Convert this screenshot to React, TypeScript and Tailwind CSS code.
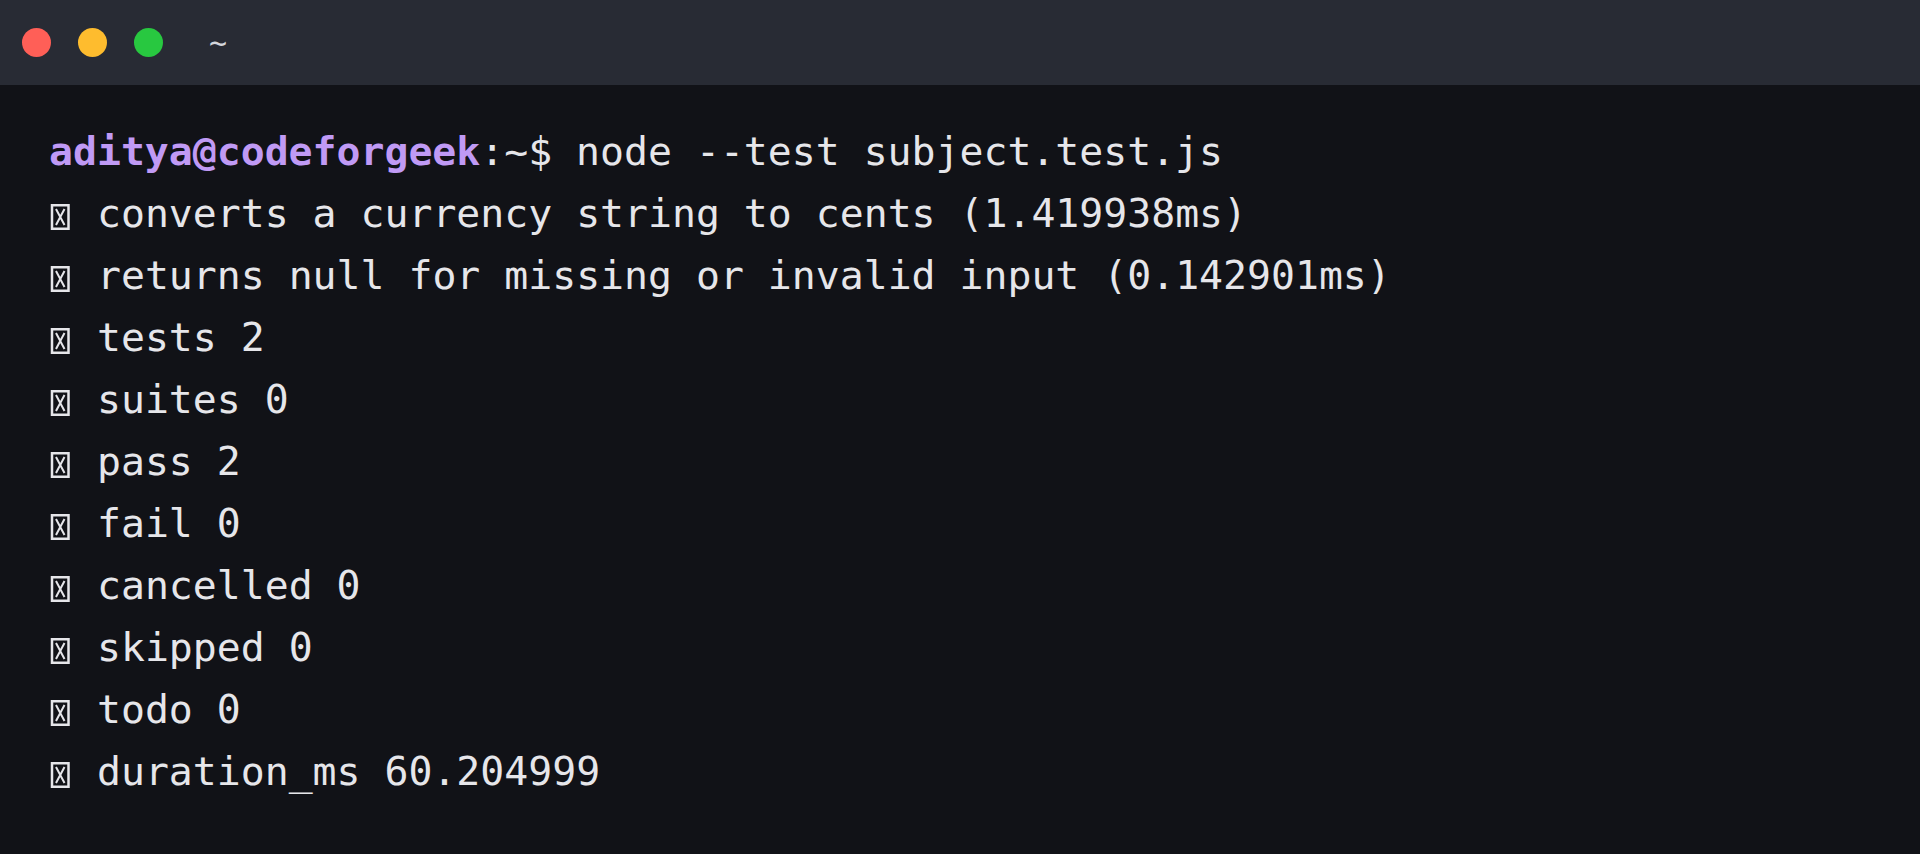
import React from 'react';

const lines = [
  'converts a currency string to cents (1.419938ms)',
  'returns null for missing or invalid input (0.142901ms)',
  'tests 2',
  'suites 0',
  'pass 2',
  'fail 0',
  'cancelled 0',
  'skipped 0',
  'todo 0',
  'duration_ms 60.204999',
];

// missing-glyph box the terminal prints in place of the status symbol
function Tofu() {
  return (
    <svg width="24" height="26" viewBox="0 0 24 26" className="inline-block">
      <rect x="3" y="1.25" width="16.5" height="23.5" fill="none" stroke="#e6e6ea" strokeWidth="2.5" />
      <path d="M7 5 L15.5 21 M15.5 5 L7 21" stroke="#e6e6ea" strokeWidth="2" fill="none" />
    </svg>
  );
}

export default function App() {
  return (
    <div className="flex h-[854px] w-[1920px] flex-col overflow-hidden bg-[#111217]">
      <div className="flex h-[85px] shrink-0 items-center bg-[#282b34] pl-[22px]">
        <div className="flex items-center gap-[27px]">
          <span className="h-[29px] w-[29px] rounded-full bg-[#ff5f57]" />
          <span className="h-[29px] w-[29px] rounded-full bg-[#febc2e]" />
          <span className="h-[29px] w-[29px] rounded-full bg-[#28c840]" />
        </div>
        <span className="ml-[46px] font-['DejaVu_Sans_Mono',monospace] text-[30px] text-[#d4d6dc]">~</span>
      </div>
      <div className="pl-[49px] pt-[35px] font-['DejaVu_Sans_Mono','Liberation_Mono',monospace] text-[39.8px] leading-[62px] text-[#e6e6ea] whitespace-pre">
        <div>
          <span className="font-bold text-[#c09af5]">aditya@codeforgeek</span>
          <span>:~$ node --test subject.test.js</span>
        </div>
        {lines.map((l) => (
          <div key={l}>
            <Tofu />
            {' ' + l}
          </div>
        ))}
      </div>
    </div>
  );
}
